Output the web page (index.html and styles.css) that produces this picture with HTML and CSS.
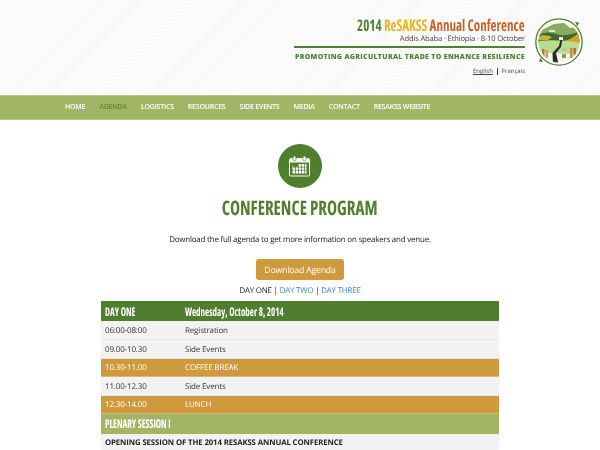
FILE: index.html
```html
<!DOCTYPE html>
<html lang="en">
<head>
<meta charset="utf-8">
<title>Conference Program</title>
<link rel="stylesheet" href="styles.css">
</head>
<body>
<header class="masthead">
  <div class="brand">
    <div class="brand-text">
      <h1 class="conf-title"><span class="narrow narrow-right"><span class="t-green">2014</span> <span class="t-yellow">ReSAKSS</span> <span class="t-orange">Annual Conference</span></span></h1>
      <p class="conf-place">Addis Ababa · Ethiopia · 8-10 October</p>
      <p class="conf-theme">PROMOTING AGRICULTURAL TRADE TO ENHANCE RESILIENCE</p>
      <p class="langs"><a class="lang-on">English</a><span class="lang-sep"></span><a class="lang-off">Français</a></p>
    </div>
    <svg class="logo" width="50" height="50" viewBox="0 0 50 50" aria-hidden="true">
      <circle cx="25" cy="25" r="23.2" fill="#fff" stroke="#4f8230" stroke-width="1.3"/>
      <path d="M41 5 L45 5.500 L43.500 9.500Z" fill="#4f8230"/>
      <path d="M9 45 L5 44.500 L6.500 40.500Z" fill="#4f8230"/>
      <clipPath id="lc"><circle cx="25" cy="25" r="20.5"/></clipPath>
      <g clip-path="url(#lc)">
        <rect width="50" height="50" fill="#f3f6ea"/>
        <path d="M3 15 L12 11 L20 7 L30 6 L36 11 L42 10 L48 16 V24 H3Z" fill="#86ad5f"/>
        <path d="M3 19 Q12 13 22 17 T48 13 V26 H3Z" fill="#3d6b2f"/>
        <path d="M4 19 Q12 17 18 20 L14 23 L4 23Z" fill="#c9b23a"/>
        <path d="M27 25 Q37 23 46 15 V26 Q36 29 27 27Z" fill="#d6a423"/>
        <path d="M3 24 Q25 22 48 26 V36 Q25 38 3 34Z" fill="#b7dc92"/>
        <path d="M26.500 22 L28.500 22 L27 30 L22 36 L24.500 47 L19 47 L18.500 36 L25 29 Z" fill="#2c2a22"/>
        <rect x="8" y="32" width="2.500" height="9" fill="#b8702e"/>
        <rect x="11.500" y="33" width="2.500" height="8" fill="#d19a58"/>
        <rect x="36" y="31" width="2.500" height="10" fill="#c98a45"/>
        <rect x="39.500" y="31" width="2.500" height="10" fill="#b8702e"/>
        <rect x="28" y="37" width="4" height="4" fill="#7aa64a"/>
        <rect x="29" y="31" width="4" height="3" fill="#d5b98a"/>
        <rect x="15" y="13" width="6" height="2" fill="#e8e4b8"/>
        <rect x="25" y="20" width="4" height="3" fill="#f2f2e6"/>
      </g>
    </svg>
  </div>
</header>
<nav class="mainnav">
  <a class="nav-link">HOME</a>
  <a class="nav-link nav-active">AGENDA</a>
  <a class="nav-link">LOGISTICS</a>
  <a class="nav-link">RESOURCES</a>
  <a class="nav-link">SIDE EVENTS</a>
  <a class="nav-link">MEDIA</a>
  <a class="nav-link">CONTACT</a>
  <a class="nav-link">RESAKSS WEBSITE</a>
</nav>
<main class="content">
  <div class="badge">
    <svg width="22" height="22" viewBox="0 0 22 22" aria-hidden="true">
      <path d="M1.5 3.5H19.5A1 1 0 0 1 20.5 4.500V20A1 1 0 0 1 19.500 21H1.500A1 1 0 0 1 .5 20V4.500A1 1 0 0 1 1.500 3.500Z" fill="none" stroke="#fff" stroke-width="1"/>
      <rect x="1" y="4" width="19" height="3.500" fill="#fff"/>
      <rect x="4" y="1" width="3" height="5" rx="1.500" fill="#fff" stroke="#4f7f2e" stroke-width=".7"/>
      <rect x="14" y="1" width="3" height="5" rx="1.500" fill="#fff" stroke="#4f7f2e" stroke-width=".7"/>
      <rect x="3.500" y="9" width="14" height="9.500" fill="#fff"/>
      <g fill="#4f7f2e">
        <rect x="6.200" y="9" width=".7" height="9.500"/><rect x="9.200" y="9" width=".7" height="9.500"/><rect x="12.200" y="9" width=".7" height="9.500"/><rect x="15.200" y="9" width=".7" height="9.500"/>
        <rect x="3.500" y="11.800" width="14" height=".7"/><rect x="3.500" y="14.800" width="14" height=".7"/>
        <rect x="3.500" y="9" width="5.500" height="2.700"/>
      </g>
    </svg>
  </div>
  <h2 class="page-title"><span class="narrow narrow-center">CONFERENCE PROGRAM</span></h2>
  <p class="intro">Download the full agenda to get more information on speakers and venue.</p>
  <a class="btn">Download Agenda</a>
  <p class="day-links">DAY ONE | <a class="day-link">DAY TWO</a> | <a class="day-link">DAY THREE</a></p>
  <table class="agenda">
    <tr class="row-head"><th class="c-time"><span class="narrow narrow-left">DAY ONE</span></th><th><span class="narrow narrow-left">Wednesday, October 8, 2014</span></th></tr>
    <tr class="row-plain"><td class="c-time">06:00-08:00</td><td>Registration</td></tr>
    <tr class="row-plain"><td class="c-time">09.00-10.30</td><td>Side Events</td></tr>
    <tr class="row-break"><td class="c-time">10.30-11.00</td><td>COFFEE BREAK</td></tr>
    <tr class="row-plain"><td class="c-time">11.00-12.30</td><td>Side Events</td></tr>
    <tr class="row-break"><td class="c-time">12.30-14.00</td><td>LUNCH</td></tr>
    <tr class="row-session"><th colspan="2"><span class="narrow narrow-left">PLENARY SESSION I</span></th></tr>
    <tr class="row-title"><td colspan="2">OPENING SESSION OF THE 2014 RESAKSS ANNUAL CONFERENCE</td></tr>
  </table>
</main>
</body>
</html>
```
FILE: styles.css
```css
* { box-sizing: border-box; }
html, body { margin: 0; padding: 0; }
html { background: #fff; }
body {
  height: 450px;
  overflow: hidden;
  background: #fff;
  font-family: "Open Sans", "Noto Sans", sans-serif;
  text-rendering: geometricPrecision;
  color: #333;
  filter: blur(.35px);
}
p, h1, h2 { margin: 0; }

.narrow { display: inline-block; white-space: nowrap; }
.narrow-right { transform: scaleX(.815); transform-origin: right center; }
.narrow-center { transform: scaleX(.85); transform-origin: center; }
.narrow-left { transform: scaleX(.75); transform-origin: left center; }

.masthead {
  height: 95px;
  background: repeating-linear-gradient(135deg, #fff 0, #fff 1.500px, #f8f8f8 1.500px, #f8f8f8 3px);
  display: flex;
  justify-content: flex-end;
}
.brand { display: flex; align-items: flex-start; padding: 16px 16px 0 0; }
.brand-text { width: 231px; text-align: right; margin-right: 9px; }
.conf-title {
  font-stretch: 75%;
  font-size: 16px;
  line-height: 18px;
  font-weight: 700;
  white-space: nowrap;
}
.t-green { color: #4f8230; }
.t-yellow { color: #f4b223; }
.t-orange { color: #c8622a; }
.conf-place { font-size: 7.600px; letter-spacing: -.16px; line-height: 11px; color: #444; }
.conf-theme {
  border-top: 2px solid #4f8230;
  margin-top: 1px;
  padding-top: 4px;
  font-size: 7px;
  line-height: 11px;
  font-weight: 800;
  color: #4f8230;
  letter-spacing: .3px;
  white-space: nowrap;
}
.langs { font-size: 6px; line-height: 10px; margin-top: 3px; color: #444; display: flex; justify-content: flex-end; align-items: center; }
.lang-on { text-decoration: underline; }
.lang-sep { width: 1px; height: 7px; background: #444; margin: 0 4px; }
.logo { margin-top: 1px; flex: none; }

.mainnav {
  height: 25px;
  background: #a2b565;
  border-top: 1px solid #b9c88a;
  border-bottom: 1px solid #b9c88a;
  display: flex;
  align-items: center;
  padding-left: 65px;
  gap: 14px;
  font-size: 7px;
  letter-spacing: -.21px;
  font-weight: 600;
  color: #fff;
}
.nav-active { color: #5a8a33; }

.content { display: flex; flex-direction: column; align-items: center; padding-top: 24px; }
.badge {
  width: 44px;
  height: 44px;
  border-radius: 50%;
  background: #4f7f2e;
  display: flex;
  align-items: center;
  justify-content: center;
}
.page-title {
  font-stretch: 75%;
  font-size: 20px;
  line-height: 28px;
  font-weight: 700;
  color: #4f7f2e;
  margin-top: 6px;
}
.intro { font-size: 7.950px; letter-spacing: -.2px; line-height: 14px; color: #222; margin-top: 11px; }
.btn {
  margin-top: 12px;
  padding-top: 1px;
  width: 88px;
  height: 21px;
  border-radius: 3px;
  background: #cf9a3d;
  color: #fff;
  font-size: 8.700px;
  letter-spacing: -.18px;
  display: flex;
  align-items: center;
  justify-content: center;
}
.day-links { font-size: 7.900px; letter-spacing: -.18px; line-height: 12px; margin-top: 5px; color: #222; }
.day-link { color: #3b87c8; }

.agenda { width: 398px; border-collapse: collapse; margin-top: 4px; font-size: 8px; table-layout: fixed; }
.agenda th, .agenda td { padding: 0 4px; text-align: left; font-weight: 400; white-space: nowrap; }
.agenda td { letter-spacing: -.16px; }
.c-time { width: 80px; }
.row-head th, .row-session th {
  height: 20px;
  color: #fff;
  font-stretch: 75%;
  font-size: 12px;
  font-weight: 700;
}
.row-head th { background: #4f7f2e; }
.row-session th { background: #a2b565; }
.agenda .row-plain td { height: 18.500px; padding-top: 1px; background: #f2f2f2; border-bottom: 1px solid #e6e6e6; color: #333; }
.agenda .row-break td { height: 18.500px; padding-top: 1px; background: #cf9a3d; border-bottom: 1px solid #d9b778; color: #fff; }
.agenda .row-title td { height: 18px; font-size: 7.800px; letter-spacing: -.12px; font-weight: 700; color: #222; background: #f2f2f2; }
```
